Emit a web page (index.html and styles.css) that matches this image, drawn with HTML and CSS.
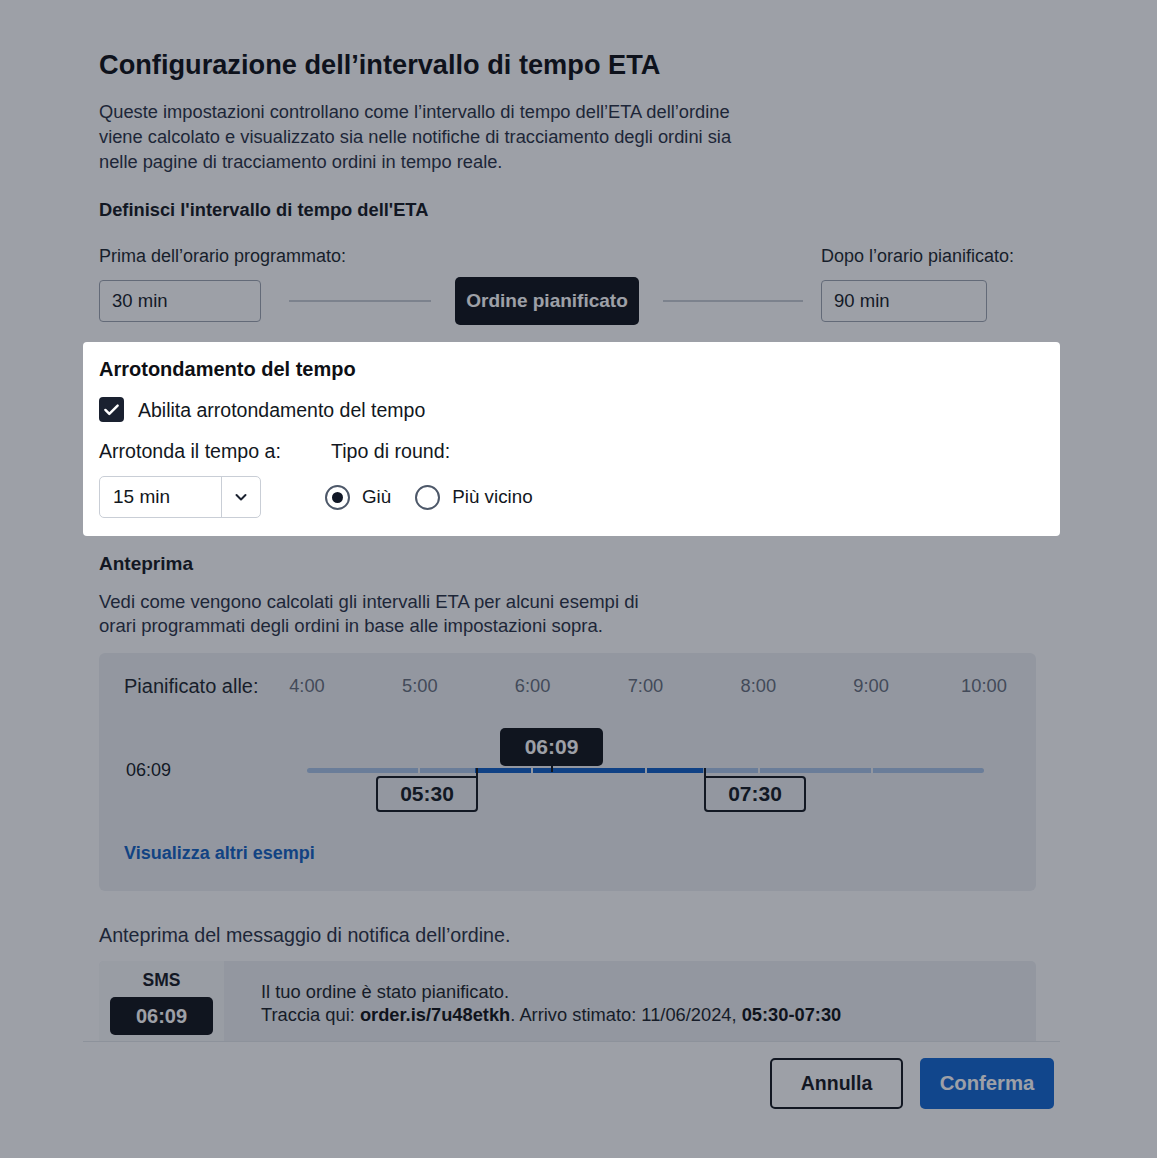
FILE: index.html
```html
<!DOCTYPE html>
<html lang="it">
<head>
<meta charset="utf-8">
<title>Configurazione dell'intervallo di tempo ETA</title>
<link rel="stylesheet" href="styles.css">
</head>
<body>
<div class="modal">
  <div class="content">
    <h1 class="title">Configurazione dell’intervallo di tempo ETA</h1>
    <p class="intro">Queste impostazioni controllano come l’intervallo di tempo dell’ETA dell’ordine viene calcolato e visualizzato sia nelle notifiche di tracciamento degli ordini sia nelle pagine di tracciamento ordini in tempo reale.</p>

    <h2 class="section-title">Definisci l'intervallo di tempo dell'ETA</h2>
    <div class="range-grid">
      <div class="field-label left-label">Prima dell’orario programmato:</div>
      <div class="field-label right-label">Dopo l’orario pianificato:</div>
      <div class="text-input before-input">30 min</div>
      <div class="connector left-connector"></div>
      <div class="anchor-btn">Ordine pianificato</div>
      <div class="connector right-connector"></div>
      <div class="text-input after-input">90 min</div>
    </div>
  </div>

  <section class="highlight">
    <h2 class="hl-title">Arrotondamento del tempo</h2>
    <label class="check-row">
      <span class="checkbox">
        <svg viewBox="0 0 24 24" width="21" height="21"><path d="M5 12.5l4.5 4.5L19 7.5" fill="none" stroke="#fff" stroke-width="2.8" stroke-linecap="round" stroke-linejoin="round"/></svg>
      </span>
      <span class="check-label">Abilita arrotondamento del tempo</span>
    </label>
    <div class="round-row">
      <div class="round-col">
        <div class="hl-label">Arrotonda il tempo a:</div>
        <div class="select">
          <span class="select-value">15 min</span>
          <span class="select-arrow">
            <svg viewBox="0 0 16 16" width="16" height="16"><path d="M3.5 6l4.5 4.5L12.5 6" fill="none" stroke="#1b2230" stroke-width="2" stroke-linecap="round" stroke-linejoin="round"/></svg>
          </span>
        </div>
      </div>
      <div class="round-col">
        <div class="hl-label">Tipo di round:</div>
        <div class="radios">
          <label class="radio-opt"><span class="radio checked"></span><span>Giù</span></label>
          <label class="radio-opt"><span class="radio"></span><span>Più vicino</span></label>
        </div>
      </div>
    </div>
  </section>

  <div class="content">
    <h2 class="section-title preview-title">Anteprima</h2>
    <p class="preview-text">Vedi come vengono calcolati gli intervalli ETA per alcuni esempi di orari programmati degli ordini in base alle impostazioni sopra.</p>

    <div class="chart">
      <div class="hours-row">
        <div class="row-label">Pianificato alle:</div>
        <div class="hours">
          <span class="hour"><span>4:00</span></span>
          <span class="hour"><span>5:00</span></span>
          <span class="hour"><span>6:00</span></span>
          <span class="hour"><span>7:00</span></span>
          <span class="hour"><span>8:00</span></span>
          <span class="hour"><span>9:00</span></span>
          <span class="hour"><span>10:00</span></span>
        </div>
      </div>
      <div class="tl-row">
        <div class="row-label time-label">06:09</div>
        <div class="timeline">
          <div class="track">
            <span class="seg"></span>
            <span class="seg seg-end-dark"></span>
            <span class="seg seg-dark"></span>
            <span class="seg seg-start-dark"></span>
            <span class="seg"></span>
            <span class="seg"></span>
          </div>
          <div class="tag tag-now" style="left: 193px;">06:09</div>
          <div class="stem" style="left: 244px;"></div>
          <div class="tag tag-bound tag-start" style="left: 69px;">05:30</div>
          <div class="tag tag-bound tag-end" style="left: 397px;">07:30</div>
        </div>
      </div>
      <a class="more-link" href="#">Visualizza altri esempi</a>
    </div>

    <p class="notif-label">Anteprima del messaggio di notifica dell’ordine.</p>
    <div class="sms">
      <div class="sms-side">
        <div class="sms-title">SMS</div>
        <div class="sms-time">06:09</div>
      </div>
      <div class="sms-body">
        <div>Il tuo ordine è stato pianificato.</div>
        <div>Traccia qui: <b>order.is/7u48etkh</b>. Arrivo stimato: 11/06/2024, <b>05:30-07:30</b></div>
      </div>
    </div>
  </div>

  <footer class="footer">
    <button class="btn btn-secondary">Annulla</button>
    <button class="btn btn-primary">Conferma</button>
  </footer>
</div>
</body>
</html>
```

FILE: styles.css
```css
* { box-sizing: border-box; }

html, body {
  margin: 0;
  padding: 0;
  background: #ffffff;
}

body {
  font-family: "Liberation Sans", Arial, Helvetica, sans-serif;
  color: #1b2433;
  overflow: hidden;
  height: 1158px;
}

.modal {
  width: 977px;
  margin-left: 83px;
  padding-top: 49px;
}

.content {
  padding: 0 24px 0 16px;
}

.title {
  margin: 0;
  font-size: 27.2px;
  line-height: 32px;
  font-weight: 700;
  color: #05070b;
}

.intro {
  margin: 18px 0 0;
  max-width: 660px;
  font-size: 18.3px;
  line-height: 25px;
  color: #1e2a3c;
}

.section-title {
  margin: 24px 0 0;
  font-size: 18.3px;
  line-height: 24px;
  font-weight: 700;
  color: #0b0f16;
}

.range-grid {
  margin-top: 22px;
  display: grid;
  grid-template-columns: 162px 194px 184px 182px 166px;
  grid-template-rows: 24px 48px;
  row-gap: 9px;
  align-items: center;
}

.field-label {
  font-size: 18px;
  line-height: 24px;
  color: #141b26;
  white-space: nowrap;
}

.left-label { grid-column: 1 / span 3; grid-row: 1; }
.right-label { grid-column: 5; grid-row: 1; }
.before-input { grid-column: 1; grid-row: 2; }
.left-connector { grid-column: 2; grid-row: 2; margin: 0 24px 0 28px; }
.anchor-btn { grid-column: 3; grid-row: 2; }
.right-connector { grid-column: 4; grid-row: 2; margin: 0 18px 0 24px; }
.after-input { grid-column: 5; grid-row: 2; }

.text-input {
  height: 42px;
  border: 1.5px solid #9aa1ad;
  border-radius: 4px;
  padding: 0 12px;
  display: flex;
  align-items: center;
  font-size: 18.5px;
  color: #0e131b;
}

.connector {
  height: 2px;
  background: #c6cad1;
}

.anchor-btn {
  height: 48px;
  border-radius: 5px;
  background: #070a10;
  color: #ffffff;
  display: flex;
  align-items: center;
  justify-content: center;
  font-size: 19px;
  font-weight: 700;
}

/* spotlighted section */
.highlight {
  position: relative;
  z-index: 2;
  margin-top: 17px;
  background: #ffffff;
  border-radius: 4px;
  padding: 15px 16px 18px;
  box-shadow: 0 0 0 3000px rgba(28, 34, 50, 0.43);
}

.hl-title {
  margin: 0;
  font-size: 20px;
  line-height: 24px;
  font-weight: 700;
  color: #0d0f14;
}

.check-row {
  margin-top: 16px;
  display: flex;
  align-items: center;
  gap: 14px;
}

.checkbox {
  width: 25px;
  height: 25px;
  border-radius: 4px;
  background: #1a2130;
  display: flex;
  align-items: center;
  justify-content: center;
}

.check-label {
  font-size: 19.5px;
  line-height: 24px;
  color: #121721;
}

.hl-label {
  font-size: 19.6px;
  line-height: 24px;
  color: #121721;
  white-space: nowrap;
}

.radio-opt {
  font-size: 18.8px;
  line-height: 24px;
  color: #121721;
}

.round-row {
  margin-top: 17px;
  display: grid;
  grid-template-columns: 232px auto;
}

.round-col {
  display: flex;
  flex-direction: column;
  gap: 13px;
}

.select {
  width: 162px;
  height: 42px;
  border: 1.5px solid #c9ced6;
  border-radius: 5px;
  display: flex;
  align-items: stretch;
}
.select-value {
  flex: 1;
  display: flex;
  align-items: center;
  padding-left: 13px;
  font-size: 19px;
  color: #121721;
}
.select-arrow {
  width: 39px;
  border-left: 1.5px solid #c9ced6;
  display: flex;
  align-items: center;
  justify-content: center;
}

.radios {
  height: 42px;
  display: flex;
  align-items: center;
  gap: 24px;
  margin-left: -6px;
}
.radio-opt {
  display: flex;
  align-items: center;
  gap: 12px;
}
.radio {
  width: 25px;
  height: 25px;
  border-radius: 50%;
  border: 2px solid #4d5869;
  display: flex;
  align-items: center;
  justify-content: center;
}
.radio.checked::after {
  content: "";
  width: 11px;
  height: 11px;
  border-radius: 50%;
  background: #111826;
}

.preview-title {
  margin-top: 16px;
  font-size: 19px;
}

.preview-text {
  margin: 14px 0 0;
  max-width: 560px;
  font-size: 18.5px;
  line-height: 24px;
  color: #1e2a3c;
}

/* chart */
.chart {
  margin-top: 15px;
  background: #edf0f3;
  border-radius: 6px;
  padding: 21px 0 26px 25px;
  height: 238px;
}

.hours-row {
  display: flex;
  align-items: center;
  height: 24px;
}
.row-label {
  width: 183px;
  flex: none;
  font-size: 20px;
  color: #151b25;
}
.hours {
  width: 677px;
  display: flex;
  justify-content: space-between;
}
.hour {
  width: 0;
  display: flex;
  justify-content: center;
  white-space: nowrap;
  font-size: 18.3px;
  color: #616977;
}

.tl-row {
  margin-top: 30px;
  display: flex;
  align-items: center;
  height: 84px;
}
.time-label {
  padding-left: 2px;
  font-size: 18px;
  color: #0c1018;
}

.timeline {
  position: relative;
  width: 677px;
  height: 84px;
}
.track {
  position: absolute;
  left: 0;
  right: 0;
  top: 40px;
  height: 5px;
  display: flex;
  gap: 2px;
  border-radius: 3px;
  overflow: hidden;
}
.seg {
  flex: 1;
  background: #a6c1e6;
}
.seg-dark { background: #0758c4; }
.seg-end-dark { background: linear-gradient(to right, #a6c1e6 50%, #0758c4 50%); }
.seg-start-dark { background: linear-gradient(to right, #0758c4 50%, #a6c1e6 50%); }

.tag {
  position: absolute;
  width: 102px;
  display: flex;
  align-items: center;
  justify-content: center;
  font-size: 21px;
  font-weight: 700;
}
.tag-now {
  top: 0;
  height: 38px;
  width: 103px;
  background: #080b11;
  color: #ffffff;
  border-radius: 5px;
}
.stem {
  position: absolute;
  top: 37px;
  width: 2px;
  height: 7px;
  background: #080b11;
}
.tag-bound {
  top: 48px;
  height: 36px;
  border: 2px solid #0c1018;
  border-radius: 4px;
  color: #0c1018;
}
.tag-bound::after {
  content: "";
  position: absolute;
  top: -10px;
  width: 2px;
  height: 10px;
  background: #0c1018;
}
.tag-start { border-top-right-radius: 0; }
.tag-start::after { right: -2px; }
.tag-end { border-top-left-radius: 0; }
.tag-end::after { left: -2px; }

.more-link {
  display: block;
  margin-top: 29px;
  font-size: 18px;
  line-height: 24px;
  font-weight: 700;
  color: #0a5cc0;
  text-decoration: none;
}

.notif-label {
  margin: 32px 0 0;
  font-size: 19.7px;
  line-height: 24px;
  color: #1e2a3c;
}

.sms {
  margin-top: 14px;
  height: 80px;
  background: #edf0f3;
  border-radius: 5px 5px 0 0;
  display: flex;
}
.sms-side {
  width: 125px;
  background: #f8f9fa;
  border-top-left-radius: 5px;
  display: flex;
  flex-direction: column;
  align-items: center;
  padding-top: 8px;
}
.sms-title {
  font-size: 17.5px;
  line-height: 22px;
  font-weight: 700;
  color: #0d1118;
}
.sms-time {
  margin-top: 6px;
  width: 103px;
  height: 38px;
  border-radius: 5px;
  background: #080b11;
  color: #ffffff;
  font-size: 20px;
  font-weight: 700;
  display: flex;
  align-items: center;
  justify-content: center;
}
.sms-body {
  padding: 19px 0 0 37px;
  font-size: 18.3px;
  line-height: 23px;
  color: #121721;
}
.sms-body b { color: #06080c; }

.footer {
  border-top: 1.5px solid #e3e6ea;
  padding: 16px 6px 0 0;
  display: flex;
  justify-content: flex-end;
  gap: 17px;
}

.btn {
  width: 133px;
  height: 51px;
  border-radius: 5px;
  font-family: inherit;
  font-size: 19.5px;
  font-weight: 700;
  cursor: pointer;
}
.btn-secondary {
  background: #ffffff;
  border: 2px solid #0b0f16;
  color: #0b0f16;
}
.btn-primary {
  width: 134px;
  font-size: 20.3px;
  background: #0a62d0;
  border: none;
  color: #ffffff;
}
```
